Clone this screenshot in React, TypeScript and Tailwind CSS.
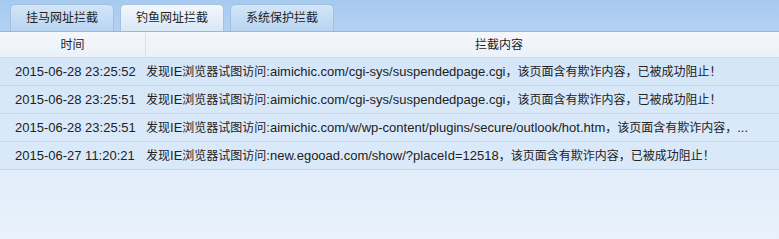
import React from 'react';

const rows = [
  {
    time: '2015-06-28 23:25:52',
    text: '发现IE浏览器试图访问:aimichic.com/cgi-sys/suspendedpage.cgi，该页面含有欺诈内容，已被成功阻止！',
  },
  {
    time: '2015-06-28 23:25:51',
    text: '发现IE浏览器试图访问:aimichic.com/cgi-sys/suspendedpage.cgi，该页面含有欺诈内容，已被成功阻止！',
  },
  {
    time: '2015-06-28 23:25:51',
    text: '发现IE浏览器试图访问:aimichic.com/w/wp-content/plugins/secure/outlook/hot.htm，该页面含有欺诈内容，...',
  },
  {
    time: '2015-06-27 11:20:21',
    text: '发现IE浏览器试图访问:new.egooad.com/show/?placeId=12518，该页面含有欺诈内容，已被成功阻止！',
  },
];

const tabs = ['挂马网址拦截', '钓鱼网址拦截', '系统保护拦截'];

// chinese runs render a bit smaller than the latin text in the original
function Mixed({ text }: { text: string }) {
  const parts = text.split(/([\u3000-\u9fff\uff00-\uffef]+)/);
  return (
    <>
      {parts.map((p, i) =>
        i % 2 === 1 ? (
          <span key={i} className="text-[12px]">
            {p}
          </span>
        ) : (
          <span key={i}>{p}</span>
        )
      )}
    </>
  );
}

export default function App() {
  return (
    <div
      className="flex h-[239px] w-[779px] overflow-hidden bg-gradient-to-b from-[#a6caf0] via-[#dbe9f9] to-[#e9f2fc] text-[#222]"
      style={{ fontFamily: '"Liberation Sans", Arial, "Noto Sans CJK SC", sans-serif' }}
    >
      <div className="flex w-[2px] flex-col bg-[#9fb3c8]">
        <div className="mt-[166px] h-[34px] bg-[#b07a2a]" />
      </div>
      <div className="flex flex-1 flex-col">
        <div className="flex h-[32px] items-end gap-[6px] border-b border-[#9fb6cf] pl-[10px]">
          {tabs.map((t, i) => (
            <div
              key={t}
              className={
                'flex h-[27px] w-[104px] items-center justify-center rounded-t-[5px] border border-b-0 text-[12px] ' +
                (i === 1
                  ? 'border-[#a9c1da] bg-gradient-to-b from-[#f2f7fd] to-[#d9e8f7]'
                  : 'border-[#a3bfdc] bg-gradient-to-b from-[#d3e5f8] to-[#b9d5f2]')
              }
            >
              {t}
            </div>
          ))}
        </div>
        <div className="flex h-[26px] border-b border-[#cfdae6] bg-gradient-to-b from-[#f4f7fc] to-[#ebf1f8] text-[12px]">
          <div className="flex w-[146px] items-center justify-center border-r border-[#dbe1e8]">时间</div>
          <div className="flex w-[706px] items-center justify-center">拦截内容</div>
        </div>
        {rows.map((r, i) => (
          <div
            key={i}
            className="flex h-[28px] items-center border-b border-[#c6d9ec] bg-[#d8e8f9]/80 text-[13px] whitespace-nowrap"
          >
            <div className="w-[146px] pl-[15px]">{r.time}</div>
            <div>
              <Mixed text={r.text} />
            </div>
          </div>
        ))}
      </div>
    </div>
  );
}
